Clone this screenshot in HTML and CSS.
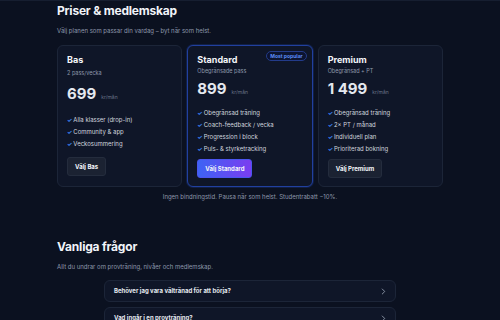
FILE: index.html
```html
<!DOCTYPE html>
<html lang="sv">
<head>
  <meta charset="utf-8">
  <title>Priser &amp; medlemskap</title>
  <link rel="stylesheet" href="styles.css">
</head>
<body>
 <!-- pricing -->
 <section class="section pricing">
  <h2 class="section-title">Priser &amp; medlemskap</h2>
  <p class="section-lead">Välj planen som passar din vardag – byt när som helst.</p>

  <div class="plans">
   <div class="plan">
    <h3 class="plan-name">Bas</h3>
    <div class="plan-sub">2 pass/vecka</div>
    <div class="plan-price"><span class="amount">699</span><span class="unit">kr/mån</span></div>
    <ul class="plan-features">
     <li>Alla klasser (drop-in)</li>
     <li>Community &amp; app</li>
     <li>Veckosummering</li>
    </ul>
    <div><button class="btn btn-ghost">Välj Bas</button></div>
   </div>

   <div class="plan plan-featured">
    <span class="badge">Most popular</span>
    <h3 class="plan-name">Standard</h3>
    <div class="plan-sub">Obegränsade pass</div>
    <div class="plan-price"><span class="amount">899</span><span class="unit">kr/mån</span></div>
    <ul class="plan-features">
     <li>Obegränsad träning</li>
     <li>Coach-feedback / vecka</li>
     <li>Progression i block</li>
     <li>Puls- &amp; styrketracking</li>
    </ul>
    <div><button class="btn btn-primary">Välj Standard</button></div>
   </div>

   <div class="plan">
    <h3 class="plan-name">Premium</h3>
    <div class="plan-sub">Obegränsad + PT</div>
    <div class="plan-price"><span class="amount">1 499</span><span class="unit">kr/mån</span></div>
    <ul class="plan-features">
     <li>Obegränsad träning</li>
     <li>2× PT / månad</li>
     <li>Individuell plan</li>
     <li>Prioriterad bokning</li>
    </ul>
    <div><button class="btn btn-ghost">Välj Premium</button></div>
   </div>
  </div>

  <p class="plans-note">Ingen bindningstid. Pausa när som helst. Studentrabatt −10%.</p>
 </section>

 <!-- faq -->
 <section class="section faq">
  <h2 class="section-title">Vanliga frågor</h2>
  <p class="section-lead">Allt du undrar om provträning, nivåer och medlemskap.</p>

  <div class="faq-list">
   <div class="faq-item">
    <span>Behöver jag vara vältränad för att börja?</span>
    <svg class="chev" viewBox="0 0 6 8" width="5" height="7"><path d="M1.5 1 L4.5 4 L1.5 7" fill="none" stroke="#9aa4b6" stroke-width="1" stroke-linecap="round" stroke-linejoin="round"/></svg>
   </div>
   <div class="faq-item">
    <span>Vad ingår i en provträning?</span>
    <svg class="chev" viewBox="0 0 6 8" width="5" height="7"><path d="M1.5 1 L4.5 4 L1.5 7" fill="none" stroke="#9aa4b6" stroke-width="1" stroke-linecap="round" stroke-linejoin="round"/></svg>
   </div>
  </div>
 </section>
</body>
</html>
```

FILE: styles.css
```css
body {
  margin: 0;
  background-color: #0b1120;
  color: #e5e9f0;
  font-family: Inter, "Noto Sans", sans-serif;
  border-top: 1px solid #161e30;
}

.section {
  width: 386px;
  margin: 0 auto;
}

.pricing {
  padding-top: 2px;
}

.section-title {
  margin: 0;
  font-size: 12px;
  line-height: 16px;
  font-weight: 700;
  letter-spacing: -0.2px;
  color: #f1f4f9;
}

.section-lead {
  margin: 8px 0 0;
  font-size: 6px;
  line-height: 8px;
  color: #8e98ab;
}

.plans {
  display: grid;
  grid-template-columns: repeat(3, 1fr);
  gap: 5px;
  margin-top: 10px;
}

.plan {
  position: relative;
  display: grid;
  background-color: #0f1628;
  border: 1px solid #1c2538;
  border-radius: 6px;
  padding: 8px 9px 8px;
}

.plan-featured {
  border-color: #21409f;
  box-shadow: 0 0 0 1px rgba(30, 58, 138, 0.35);
}

.badge {
  position: absolute;
  top: 5px;
  right: 5px;
  font-size: 5px;
  line-height: 6px;
  font-weight: 700;
  color: #5b8cf5;
  background-color: #0c1430;
  border: 1px solid #233b8a;
  border-radius: 8px;
  padding: 1px 3px;
}

.plan-name {
  margin: 0;
  font-size: 9px;
  line-height: 11px;
  font-weight: 700;
  color: #f3f5f9;
}

.plan-sub {
  margin-top: 3px;
  font-size: 5.5px;
  line-height: 7px;
  color: #8e98ab;
}

.plan-price {
  display: flex;
  align-items: baseline;
  gap: 5px;
  margin-top: 5px;
}

.amount {
  font-size: 15px;
  line-height: 18px;
  font-weight: 700;
  color: #e4e8ef;
}

.unit {
  font-size: 5px;
  color: #6b7588;
}

.plan-features {
  list-style: none;
  margin: 11px 0 0;
  padding: 0;
  display: grid;
  gap: 5px;
  align-content: start;
}

.plan-features li {
  font-size: 6px;
  line-height: 7px;
  color: #cfd5df;
}

.plan-features li::before {
  content: "✓";
  color: #3b82f6;
  font-weight: 700;
  margin-right: 1px;
}

.btn {
  margin-top: 7px;
  font-family: inherit;
  font-size: 6px;
  line-height: 7px;
  font-weight: 700;
  color: #f3f5f9;
  border-radius: 3px;
  padding: 5px 7px;
  cursor: pointer;
}

.btn-ghost {
  background-color: #1b2232;
  border: 1px solid #242c3d;
}

.btn-primary {
  background: linear-gradient(90deg, #3d63f4, #7b3df0);
  border: 1px solid #4b55ee;
}

.plans-note {
  margin: 6px 0 0;
  text-align: center;
  font-size: 6px;
  line-height: 8px;
  color: #8e98ab;
}

.faq {
  margin-top: 38px;
}

.faq-list {
  width: 292px;
  margin: 9px auto 0;
  display: flex;
  flex-direction: column;
  gap: 5px;
}

.faq-item {
  display: flex;
  align-items: center;
  justify-content: space-between;
  background-color: #0f1628;
  border: 1px solid #1c2538;
  border-radius: 6px;
  padding: 6px 9px;
  font-size: 6px;
  line-height: 8px;
  font-weight: 700;
  color: #e4e8ef;
}
```
